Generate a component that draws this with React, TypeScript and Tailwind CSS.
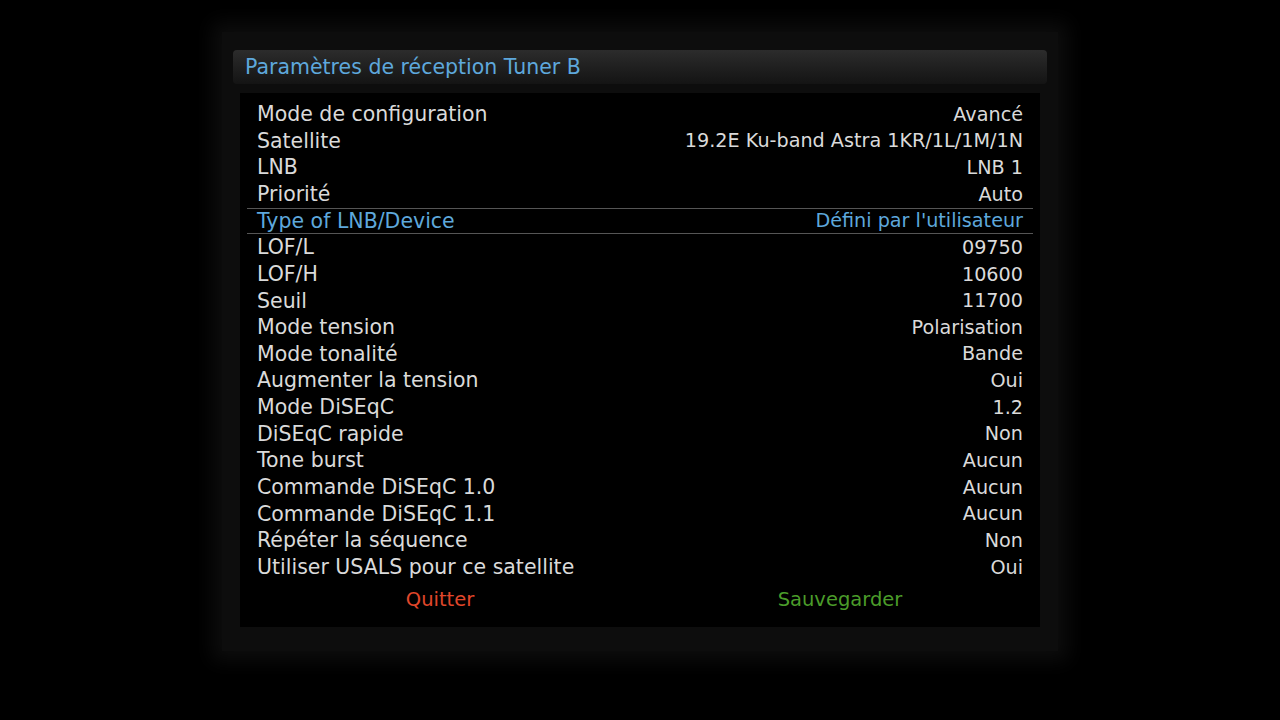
import React from "react";

const rows: [string, string][] = [
  ["Mode de configuration", "Avancé"],
  ["Satellite", "19.2E Ku-band Astra 1KR/1L/1M/1N"],
  ["LNB", "LNB 1"],
  ["Priorité", "Auto"],
  ["Type of LNB/Device", "Défini par l'utilisateur"],
  ["LOF/L", "09750"],
  ["LOF/H", "10600"],
  ["Seuil", "11700"],
  ["Mode tension", "Polarisation"],
  ["Mode tonalité", "Bande"],
  ["Augmenter la tension", "Oui"],
  ["Mode DiSEqC", "1.2"],
  ["DiSEqC rapide", "Non"],
  ["Tone burst", "Aucun"],
  ["Commande DiSEqC 1.0", "Aucun"],
  ["Commande DiSEqC 1.1", "Aucun"],
  ["Répéter la séquence", "Non"],
  ["Utiliser USALS pour ce satellite", "Oui"],
];

export default function App() {
  return (
    <div
      className="w-[1280px] h-[720px] bg-black overflow-hidden pt-[32px]"
      style={{ fontFamily: '"DejaVu Sans", "Liberation Sans", sans-serif' }}
    >
      <div className="mx-auto w-[836px] bg-[#0d0d0d] pt-[18px] pb-[24px] px-[11px] shadow-[0_0_18px_10px_#0d0d0d]">
        <div className="h-[34px] rounded-[4px] bg-gradient-to-b from-[#2c2c2c] to-[#141414] flex items-center px-[12px] text-[20.5px] text-[#5ea8dc] leading-none">
          Paramètres de réception Tuner B
        </div>
        <div className="mt-[9px] mx-[7px] bg-black pt-[8px] pb-[8px] px-[7px]">
          {rows.map(([l, r], i) => {
            const sel = i === 4;
            return (
              <div
                key={i}
                className={
                  "h-[26.65px] flex items-center justify-between px-[10px] leading-none " +
                  (sel
                    ? "text-[#5ea8dc] border-y border-[#555]"
                    : "text-[#dadada]")
                }
              >
                <span className="text-[20.5px]">{l}</span>
                <span className="text-[19.2px]">{r}</span>
              </div>
            );
          })}
          <div className="h-[38px] -mx-[7px] flex items-center text-[19.5px] leading-none">
            <div className="w-1/2 text-center text-[#e0472b]">Quitter</div>
            <div className="w-1/2 text-center text-[#4b9c2a]">Sauvegarder</div>
          </div>
        </div>
      </div>
    </div>
  );
}
